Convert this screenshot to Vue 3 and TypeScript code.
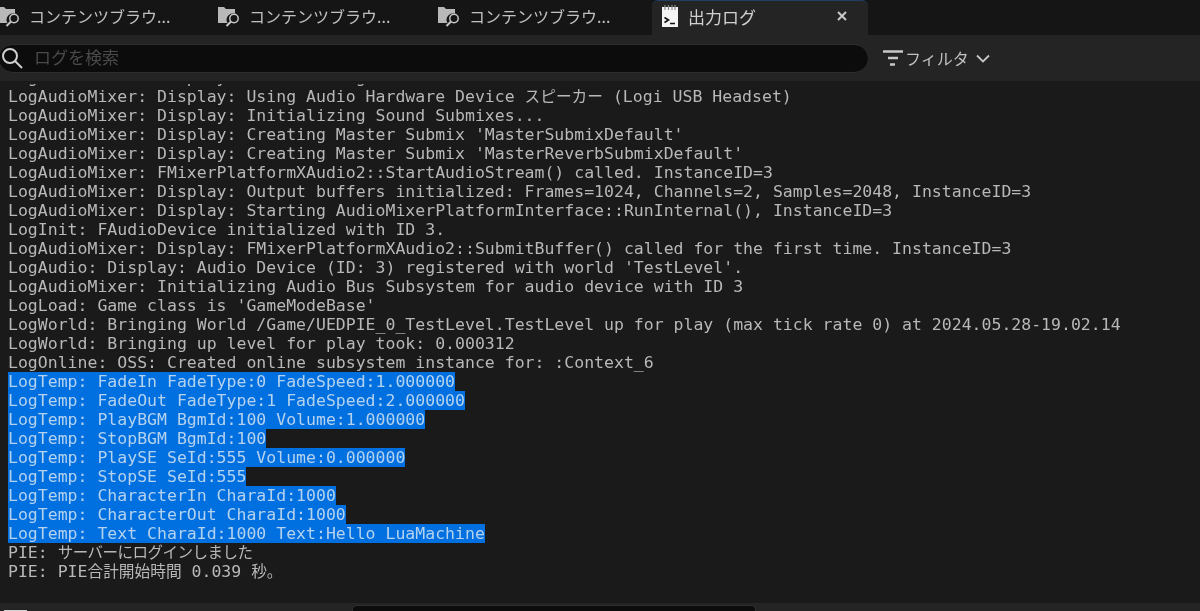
<script setup lang="ts">
interface Tab { title: string }
interface Seg { text: string; cjk: boolean }
const tabs: Tab[] = [
  { title: 'コンテンツブラウ...' },
  { title: 'コンテンツブラウ...' },
  { title: 'コンテンツブラウ...' },
]
const plain = [
  "LogAudioMixer: Display: Using Audio Hardware Device スピーカー (Logi USB Headset)",
  "LogAudioMixer: Display: Initializing Sound Submixes...",
  "LogAudioMixer: Display: Creating Master Submix 'MasterSubmixDefault'",
  "LogAudioMixer: Display: Creating Master Submix 'MasterReverbSubmixDefault'",
  "LogAudioMixer: FMixerPlatformXAudio2::StartAudioStream() called. InstanceID=3",
  "LogAudioMixer: Display: Output buffers initialized: Frames=1024, Channels=2, Samples=2048, InstanceID=3",
  "LogAudioMixer: Display: Starting AudioMixerPlatformInterface::RunInternal(), InstanceID=3",
  "LogInit: FAudioDevice initialized with ID 3.",
  "LogAudioMixer: Display: FMixerPlatformXAudio2::SubmitBuffer() called for the first time. InstanceID=3",
  "LogAudio: Display: Audio Device (ID: 3) registered with world 'TestLevel'.",
  "LogAudioMixer: Initializing Audio Bus Subsystem for audio device with ID 3",
  "LogLoad: Game class is 'GameModeBase'",
  "LogWorld: Bringing World /Game/UEDPIE_0_TestLevel.TestLevel up for play (max tick rate 0) at 2024.05.28-19.02.14",
  "LogWorld: Bringing up level for play took: 0.000312",
  "LogOnline: OSS: Created online subsystem instance for: :Context_6",
]
const selected = [
  "LogTemp: FadeIn FadeType:0 FadeSpeed:1.000000",
  "LogTemp: FadeOut FadeType:1 FadeSpeed:2.000000",
  "LogTemp: PlayBGM BgmId:100 Volume:1.000000",
  "LogTemp: StopBGM BgmId:100",
  "LogTemp: PlaySE SeId:555 Volume:0.000000",
  "LogTemp: StopSE SeId:555",
  "LogTemp: CharacterIn CharaId:1000",
  "LogTemp: CharacterOut CharaId:1000",
  "LogTemp: Text CharaId:1000 Text:Hello LuaMachine",
]
const tailTime = "PIE: PIE合計開始時間 0.039 秒。"

function segs(line: string): Seg[] {
  return line
    .split(/([\u3000-\u9fff]+)/)
    .filter((s) => s.length > 0)
    .map((s) => ({ text: s, cjk: /[\u3000-\u9fff]/.test(s) }))
}
</script>

<template>
  <div class="page">
    <div class="tabbar">
      <div v-for="(t, i) in tabs" :key="i" class="tab">
        <svg class="ticon" width="24" height="22" viewBox="0 0 24 22">
          <path d="M1 2h6l2 2h9v4.500a6.500 6.500 0 0 0-7.500 9.500H1z" fill="#b8b8b8" />
          <circle cx="17" cy="13.500" r="4.200" fill="none" stroke="#c8c8c8" stroke-width="1.500" />
          <path d="M14 16.500l-4.500 4.500" stroke="#c8c8c8" stroke-width="2" />
        </svg>
        <span class="ttext">{{ t.title }}</span>
      </div>
      <div class="tab active">
        <svg class="aicon" width="16" height="22" viewBox="0 0 16 22">
          <path d="M0 2h16v20H0z" fill="#f4f4f4" />
          <path d="M3 0v5M6.500 0v5M10 0v5M13 0v5" stroke="#8a8a8a" stroke-width="1.200" />
          <path d="M2.500 12.500l4 2.500-4 2.500" fill="none" stroke="#111" stroke-width="1.600" />
          <path d="M8 18.500h5" stroke="#111" stroke-width="1.500" />
        </svg>
        <span class="atext">出力ログ</span>
        <svg class="close" width="10" height="10" viewBox="0 0 10 10">
          <path d="M1 1l8 8M9 1l-8 8" stroke="#c8c8c8" stroke-width="2" />
        </svg>
      </div>
    </div>
    <div class="toolbar">
      <div class="search">
        <svg width="22" height="24" viewBox="0 0 22 24" class="sicon">
          <circle cx="9" cy="10" r="7" fill="none" stroke="#d0d0d0" stroke-width="2" />
          <path d="M14 15l7 7" stroke="#d0d0d0" stroke-width="2" />
        </svg>
        <span class="ph">ログを検索</span>
      </div>
      <div class="filter">
        <svg width="20" height="16" viewBox="0 0 20 16">
          <path d="M0 1.500h20M5 8h10M7 14.500h5" stroke="#c8c8c8" stroke-width="2.400" />
        </svg>
        <span>フィルタ</span>
        <svg width="14" height="9" viewBox="0 0 14 9">
          <path d="M1 1.500l6 6 6-6" fill="none" stroke="#c8c8c8" stroke-width="1.800" />
        </svg>
      </div>
    </div>
    <div class="log">
      <div class="clipped"><span>LogAudioMixer: Display: Initializing audio mixer.</span></div>
      <div v-for="(l, i) in plain" :key="'p' + i" class="line">
        <span v-for="(s, j) in segs(l)" :key="j" :class="{ cjk: s.cjk }">{{ s.text }}</span>
      </div>
      <div v-for="(l, i) in selected" :key="'s' + i" class="line"><span class="sel">{{ l }}</span></div>
      <div class="line">PIE: <span class="kana">サーバーにログインしました</span></div>
      <div class="line">
        <span v-for="(s, j) in segs(tailTime)" :key="j" :class="{ cjk: s.cjk }">{{ s.text }}</span>
      </div>
    </div>
    <div class="bottom">
      <div class="bicon"></div>
      <div class="bbox"></div>
    </div>
  </div>
</template>

<style scoped>
.page {
  width: 1200px;
  height: 611px;
  display: flex;
  flex-direction: column;
  background: #1a1a1a;
  overflow: hidden;
  font-family: "Noto Sans CJK JP", "Noto Sans", sans-serif;
  filter: blur(0.35px);
}
.tabbar {
  height: 35px;
  flex: none;
  display: flex;
  background: #151515;
}
.tab {
  width: 220px;
  display: flex;
  align-items: center;
  gap: 8px;
  color: #c0c0c0;
  font-size: 16px;
  padding-bottom: 4px;
  box-sizing: border-box;
}
.ticon { margin-left: -3px; }
.tab.active {
  width: 216px;
  margin-left: -8px;
  background: #242424;
  border-radius: 6px 6px 0 0;
  border-top: 1px solid #1d3f66;
  padding-left: 10px;
  gap: 10px;
  color: #d0d0d0;
  font-size: 17px;
}
.atext { width: 139px; }
.close { flex: none; }
.toolbar {
  height: 46px;
  flex: none;
  display: flex;
  align-items: center;
  background: #242424;
}
.search {
  width: 871px;
  height: 29px;
  margin-left: -2px;
  padding-left: 2px;
  box-sizing: border-box;
  background: #0c0c0c;
  border: 1px solid #2e2e2e;
  border-radius: 15px;
  display: flex;
  align-items: center;
  gap: 11px;
}
.ph { color: #4a4a4a; font-size: 17px; position: relative; top: -2px; }
.filter {
  margin-left: 14px;
  display: flex;
  align-items: center;
  gap: 2px;
  color: #c0c0c0;
  font-size: 16px;
  line-height: 20px;
}
.filter svg:last-child { margin-left: 5px; }
.log {
  flex: 1;
  overflow: hidden;
  padding-left: 8px;
  padding-top: 3px;
  font-family: "DejaVu Sans Mono", "Noto Sans CJK JP", monospace;
  font-size: 16.500px;
  line-height: 19px;
  color: #b8b8b8;
  white-space: pre;
}
.clipped { height: 3px; display: flex; align-items: flex-end; overflow: hidden; }
.clipped span { flex: none; line-height: 19px; height: 19px; }
.line { height: 19px; }
.cjk { font-size: 15.700px; }
.kana { font-size: 15.500px; letter-spacing: -0.500px; }
.sel { background: #0070e0; color: #b4d2ee; display: inline-block; height: 19px; }
.bottom {
  height: 8px;
  flex: none;
  display: flex;
  background: #242424;
}
.bicon { width: 23px; height: 1px; margin: 7px 0 0 4px; background: #d0d0d0; }
.bbox {
  width: 404px;
  height: 6px;
  margin: 2px 0 0 325px;
  box-sizing: border-box;
  background: #0c0c0c;
  border: 1px solid #2e2e2e;
  border-bottom: none;
  border-radius: 5px 5px 0 0;
}
</style>
